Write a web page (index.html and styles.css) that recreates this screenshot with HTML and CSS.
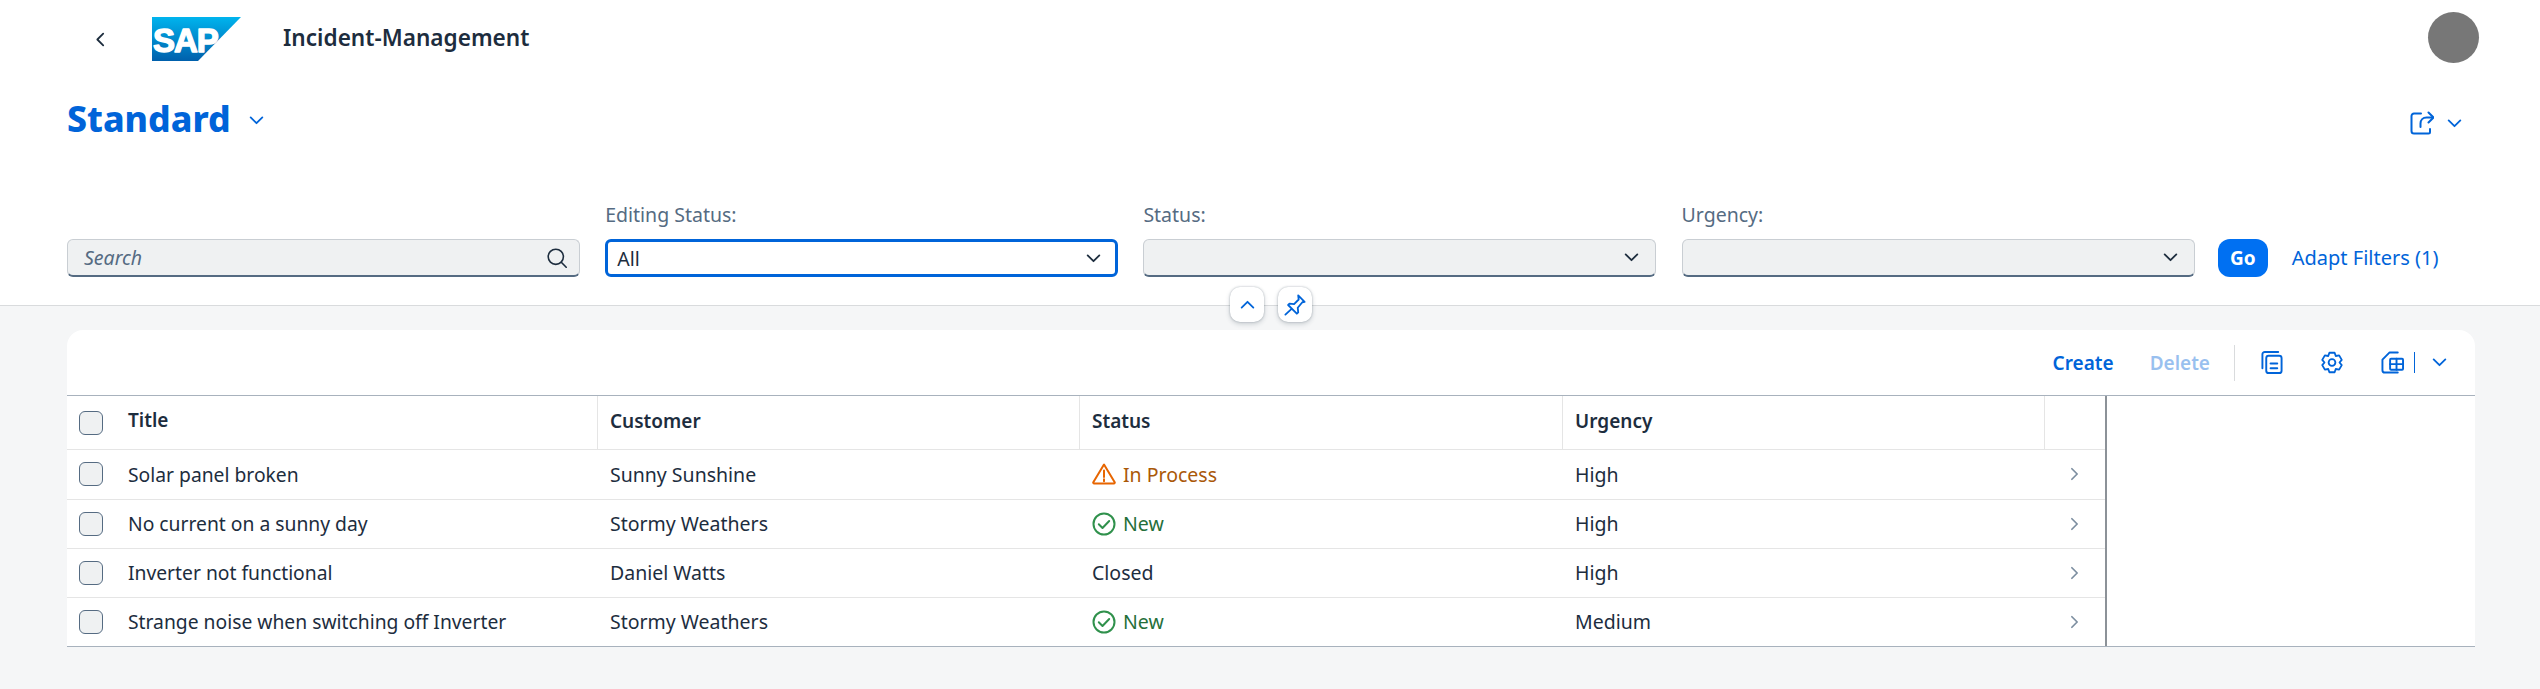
FILE: index.html
```html
<!DOCTYPE html>
<html lang="en">
<head>
  <meta charset="UTF-8">
  <meta name="viewport" content="width=device-width, initial-scale=1.0">
  <title>Incident-Management</title>
  <link rel="stylesheet" href="styles.css">
</head>
<body>
  <svg class="icon-defs" aria-hidden="true">
    <symbol id="chev-down" viewBox="0 0 16 10"><path d="M1.5 1.5 8 8l6.500-6.500"/></symbol>
    <symbol id="chev-right" viewBox="0 0 10 16"><path d="M2 2l6 6-6 6"/></symbol>
    <symbol id="chev-left" viewBox="0 0 10 16"><path d="M8 1.500 1.500 8 8 14.500"/></symbol>
    <symbol id="check-circle" viewBox="0 0 24 24"><circle cx="12" cy="12" r="10.500"/><path d="M6.800 12.300l3.700 3.700 6.700-7"/></symbol>
  </svg>

  <header class="page-head">
    <div class="shell-bar">
      <button class="icon-btn back-btn"><svg class="ico-back"><use href="#chev-left"/></svg></button>
      <svg class="sap-logo" viewBox="0 0 89 44">
        <defs>
          <linearGradient id="sapGrad" x1="0" y1="0" x2="0" y2="1">
            <stop offset="0" stop-color="#00b4ee"/>
            <stop offset="1" stop-color="#0060ac"/>
          </linearGradient>
        </defs>
        <polygon points="0,0 89,0 46,44 0,44" fill="url(#sapGrad)"/>
        <text x="1" y="35" class="sap-text">SAP</text>
      </svg>
      <span class="app-title">Incident-Management</span>
      <span class="avatar"></span>
    </div>

    <div class="title-row">
      <h1 class="variant-name">Standard</h1>
      <svg class="ico-chev variant-chev"><use href="#chev-down"/></svg>
      <div class="title-actions">
        <svg class="ico-share" viewBox="0 0 24 24">
          <path d="M11 2.500H4a2.500 2.500 0 0 0-2.500 2.500v15A2.500 2.500 0 0 0 4 22.500h14.500a1.500 1.500 0 0 0 1.500-1.500v-3"/>
          <path d="M10.500 16v-3.500c0-3.500 2.500-6 6-6h6"/>
          <path d="M18.500 1.500l5 5-5 5"/>
        </svg>
        <svg class="ico-chev"><use href="#chev-down"/></svg>
      </div>
    </div>

    <div class="filter-row">
      <div class="filter-field">
        <div class="input input-search">
          <span class="placeholder">Search</span>
          <svg class="ico-search" viewBox="0 0 20 20">
            <circle cx="8.800" cy="8.800" r="7.600"/>
            <path d="M14.300 14.300l4.900 4.900"/>
          </svg>
        </div>
      </div>
      <div class="filter-field">
        <label class="filter-label">Editing Status:</label>
        <div class="input input-focus"><span>All</span><svg class="ico-select"><use href="#chev-down"/></svg></div>
      </div>
      <div class="filter-field">
        <label class="filter-label">Status:</label>
        <div class="input"><span></span><svg class="ico-select"><use href="#chev-down"/></svg></div>
      </div>
      <div class="filter-field">
        <label class="filter-label">Urgency:</label>
        <div class="input"><span></span><svg class="ico-select"><use href="#chev-down"/></svg></div>
      </div>
      <button class="btn-go">Go</button>
      <a class="adapt-link">Adapt Filters (1)</a>
    </div>

    <div class="head-toggles">
      <button class="toggle-btn">
        <svg class="ico-up" viewBox="0 0 16 10"><path d="M1.500 8.500 8 2l6.500 6.500"/></svg>
      </button>
      <button class="toggle-btn">
        <svg class="ico-pin" viewBox="0 0 24 24">
          <path d="M15.500 1.500l7 7-2.500.5-5 6 .5 5-1.500 1.500-9.500-9.500L6 10.500l5 .5 5-5z"/>
          <path d="M8 16.500l-6.500 6"/>
        </svg>
      </button>
    </div>
  </header>

  <main class="content">
    <section class="card">
      <div class="toolbar">
        <a class="tool-text">Create</a>
        <a class="tool-text tool-disabled">Delete</a>
        <span class="tool-sep"></span>
        <svg class="tool-icon" viewBox="0 0 22 24">
          <path d="M17.500 1H3.500A2.500 2.500 0 0 0 1 3.500V18"/>
          <rect x="5" y="5" width="16" height="18" rx="2.500"/>
          <path d="M9.500 13h7M9.500 18h7"/>
        </svg>
        <svg class="tool-icon" viewBox="0 0 24 24">
          <path d="M9.150 1.370h5.700L16.100 4.900l3.680-.68 2.850 4.930L20.200 12l2.430 2.850-2.850 4.930-3.680-.68-1.250 3.530h-5.700L7.900 19.100l-3.680.68-2.850-4.930L3.800 12 1.370 9.150l2.850-4.930 3.680.68z"/>
          <circle cx="12" cy="12" r="3.700"/>
        </svg>
        <svg class="tool-icon" viewBox="0 0 24 24">
          <path d="M17.500 1.500H9L1.500 9v11a2.500 2.500 0 0 0 2.500 2.500h13.500"/>
          <rect x="9.500" y="8" width="13.500" height="11.500" rx="1"/>
          <path d="M16.200 8v11.500M9.500 13.700H23"/>
        </svg>
        <span class="tool-split"></span>
        <svg class="ico-chev tool-chev"><use href="#chev-down"/></svg>
      </div>

      <div class="table-area">
        <table class="grid-table">
          <colgroup>
            <col class="col-main"><col class="col-wide"><col class="col-wider"><col class="col-wide"><col class="col-nav">
          </colgroup>
          <thead>
            <tr>
              <th><div class="title-cell"><span class="check"></span><span class="head-title">Title</span></div></th>
              <th>Customer</th>
              <th>Status</th>
              <th>Urgency</th>
              <th></th>
            </tr>
          </thead>
          <tbody>
            <tr>
              <td><div class="title-cell"><span class="check"></span>Solar panel broken</div></td>
              <td>Sunny Sunshine</td>
              <td>
                <div class="state state-warn">
                  <svg class="state-icon" viewBox="0 0 24 22">
                    <path d="M12 1.500 1.300 19.200a.9.900 0 0 0 .8 1.300h19.800a.9.900 0 0 0 .8-1.300z"/>
                    <path d="M12 7.500v6.500M12 16.300v2"/>
                  </svg>
                  In Process
                </div>
              </td>
              <td>High</td>
              <td class="nav-cell"><svg class="ico-nav"><use href="#chev-right"/></svg></td>
            </tr>
            <tr>
              <td><div class="title-cell"><span class="check"></span>No current on a sunny day</div></td>
              <td>Stormy Weathers</td>
              <td><div class="state state-ok"><svg class="state-icon"><use href="#check-circle"/></svg>New</div></td>
              <td>High</td>
              <td class="nav-cell"><svg class="ico-nav"><use href="#chev-right"/></svg></td>
            </tr>
            <tr>
              <td><div class="title-cell"><span class="check"></span>Inverter not functional</div></td>
              <td>Daniel Watts</td>
              <td>Closed</td>
              <td>High</td>
              <td class="nav-cell"><svg class="ico-nav"><use href="#chev-right"/></svg></td>
            </tr>
            <tr>
              <td><div class="title-cell"><span class="check"></span>Strange noise when switching off Inverter</div></td>
              <td>Stormy Weathers</td>
              <td><div class="state state-ok"><svg class="state-icon"><use href="#check-circle"/></svg>New</div></td>
              <td>Medium</td>
              <td class="nav-cell"><svg class="ico-nav"><use href="#chev-right"/></svg></td>
            </tr>
          </tbody>
        </table>
      </div>
    </section>
  </main>
</body>
</html>
```

FILE: styles.css
```css
* {
  box-sizing: border-box;
}
html, body {
  height: 100%;
}
body {
  margin: 0;
  background-color: #f5f6f7;
  color: #1d2d3e;
  font-family: "Noto Sans", Arial, sans-serif;
  font-size: 19.500px;
  overflow: hidden;
}
svg {
  display: block;
  fill: none;
  stroke: currentColor;
  stroke-width: 2;
  stroke-linecap: round;
  stroke-linejoin: round;
}
button {
  font-family: inherit;
  border: none;
  padding: 0;
  background: none;
}
.icon-defs {
  display: none;
}

/* top part */
.page-head {
  position: relative;
  height: 306px;
  background-color: #fff;
  border-bottom: 1px solid #d9dbdd;
}
.shell-bar {
  display: flex;
  align-items: center;
  height: 75px;
  padding-left: 96px;
  padding-right: 61px;
}
.back-btn {
  color: #1d2d3e;
  margin-top: 4px;
}
.ico-back {
  width: 9px;
  height: 15px;
}
.sap-logo {
  width: 89px;
  height: 44px;
  margin-left: 47px;
  margin-top: 3px;
  stroke: none;
}
.sap-text {
  fill: #fff;
  stroke: #fff;
  stroke-width: 1.400px;
  font-family: "Liberation Sans", Arial, sans-serif;
  font-size: 33px;
  font-weight: 700;
  letter-spacing: -1px;
}
.app-title {
  margin-left: 42px;
  font-size: 22.600px;
  font-weight: 600;
}
.avatar {
  width: 51px;
  height: 51px;
  margin-left: auto;
  border-radius: 50%;
  background-color: #777;
}

.title-row {
  display: flex;
  align-items: center;
  height: 86px;
  padding: 0 78px 0 67px;
  color: #0064d9;
}
.variant-name {
  margin: 0;
  font-size: 35.600px;
  font-weight: 800;
}
.ico-chev {
  width: 15px;
  height: 9px;
  color: #0064d9;
}
.variant-chev {
  margin-left: 18px;
  margin-top: 5px;
}
.title-actions {
  display: flex;
  align-items: center;
  margin-left: auto;
  gap: 13px;
  margin-top: 10px;
}
.ico-share {
  width: 24px;
  height: 24px;
}

.filter-row {
  display: flex;
  align-items: flex-end;
  height: 116px;
  padding-left: 67px;
}
.filter-field {
  width: 513px;
  margin-right: 25.200px;
}
.filter-label {
  display: block;
  margin-bottom: 13px;
  color: #556b82;
  line-height: 22px;
}
.input {
  display: flex;
  align-items: center;
  justify-content: space-between;
  height: 38px;
  padding: 0 16px;
  background-color: #eff1f2;
  border: 1px solid #c9ced3;
  border-bottom: 2px solid #556b82;
  border-radius: 6px;
}
.input-focus {
  background-color: #fff;
  border: 3px solid #0064d9;
  padding: 0 14px 0 9px;
}
.input-search {
  padding-right: 12px;
}
.placeholder {
  color: #556b82;
  font-style: italic;
}
.ico-search {
  width: 20px;
  height: 20px;
  color: #1d2d3e;
  stroke-width: 1.600;
}
.ico-select {
  width: 15px;
  height: 9px;
  margin-left: auto;
  color: #1d2d3e;
}
.btn-go {
  width: 50px;
  height: 38px;
  margin-left: -2px;
  background-color: #0070f2;
  border-radius: 12px;
  color: #fff;
  font-size: 19px;
  font-weight: 700;
}
.adapt-link {
  margin-left: 24px;
  font-size: 20px;
  line-height: 38px;
  color: #0064d9;
}

.head-toggles {
  position: absolute;
  left: 1230px;
  bottom: -17px;
  display: flex;
  gap: 14px;
}
.toggle-btn {
  display: flex;
  align-items: center;
  justify-content: center;
  width: 34px;
  height: 35px;
  background-color: #fff;
  border-radius: 10px;
  box-shadow: 0 0 2px rgba(34, 53, 72, 0.35), 0 2px 5px rgba(34, 53, 72, 0.2);
  color: #0064d9;
}
.ico-up {
  width: 15px;
  height: 9px;
}
.ico-pin {
  width: 22px;
  height: 22px;
}

/* table card */
.content {
  padding: 24px 65px 0 67px;
}
.card {
  background-color: #fff;
  border-radius: 16px 16px 0 0;
}
.toolbar {
  display: flex;
  align-items: center;
  justify-content: flex-end;
  height: 65px;
  padding-right: 28px;
  color: #0064d9;
}
.tool-text {
  margin-right: 36px;
  font-weight: 600;
  font-size: 19px;
}
.tool-disabled {
  opacity: 0.4;
  margin-right: 24px;
}
.tool-sep {
  width: 1px;
  height: 36px;
  margin-right: 26px;
  background-color: #d9dbdd;
}
.tool-icon {
  width: 22px;
  height: 23px;
  margin-right: 38px;
}
.tool-icon:nth-of-type(3) {
  width: 23px;
  margin-right: 10px;
}
.tool-split {
  width: 1px;
  height: 21px;
  margin-right: 17px;
  background-color: #0064d9;
}

.table-area {
  border-top: 1px solid #a8b2bd;
  border-bottom: 1px solid #a8b2bd;
}
.grid-table {
  width: 2038px;
  table-layout: fixed;
  border-collapse: separate;
  border-spacing: 0;
  border-right: 2px solid #8c9298;
}
.col-main {
  width: 530px;
}
.col-wide {
  width: 482px;
}
.col-wider {
  width: 483px;
}
.col-nav {
  width: 61px;
}
th, td {
  padding: 0 0 0 13px;
  text-align: left;
  white-space: nowrap;
  border-bottom: 1px solid #e5e5e5;
}
th {
  height: 54px;
  padding: 0 0 3px 12px;
  font-size: 19px;
  font-weight: 600;
  border-left: 1px solid #e5e5e5;
}
td {
  height: 49px;
  padding-bottom: 1px;
}
tbody tr:first-child td {
  height: 50px;
}
tbody tr:last-child td {
  height: 48px;
  border-bottom: none;
}
th:first-child, td:first-child {
  padding-left: 12px;
  border-left: none;
}
th:first-child {
  padding-bottom: 0;
}
.head-title {
  margin-bottom: 5px;
}
.title-cell {
  display: flex;
  align-items: center;
}
td .title-cell {
  font-size: 19.300px;
}
.check {
  flex: none;
  width: 24px;
  height: 24px;
  margin-right: 25px;
  background-color: #eff1f2;
  border: 1px solid #556b82;
  border-radius: 6px;
}
.state {
  display: flex;
  align-items: center;
}
.state-icon {
  flex: none;
  width: 24px;
  height: 24px;
  margin-right: 7px;
}
.state-warn {
  color: #aa5808;
}
.state-warn .state-icon {
  color: #e76500;
}
.state-ok {
  color: #256f3a;
}
.state-ok .state-icon {
  color: #30914c;
}
.nav-cell {
  padding-left: 26px;
}
.ico-nav {
  width: 9px;
  height: 14px;
  color: #7c8ea0;
}
```
